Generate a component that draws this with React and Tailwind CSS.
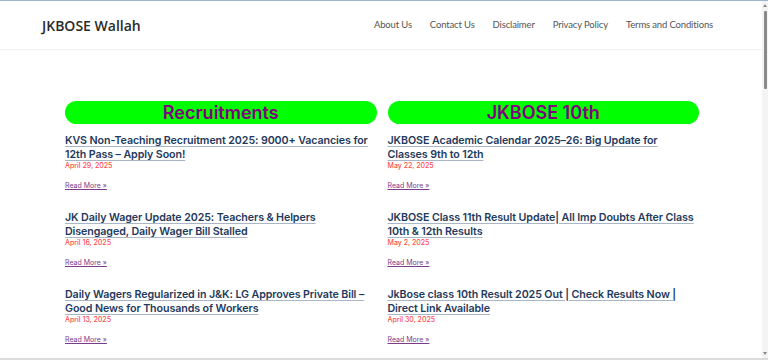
import React from "react";

const left = [
  { t: ["KVS Non-Teaching Recruitment 2025: 9000+ Vacancies for", "12th Pass – Apply Soon!"], d: "April 29, 2025" },
  { t: ["JK Daily Wager Update 2025: Teachers & Helpers", "Disengaged, Daily Wager Bill Stalled"], d: "April 16, 2025" },
  { t: ["Daily Wagers Regularized in J&K: LG Approves Private Bill –", "Good News for Thousands of Workers"], d: "April 13, 2025" },
];
const right = [
  { t: ["JKBOSE Academic Calendar 2025–26: Big Update for", "Classes 9th to 12th"], d: "May 22, 2025" },
  { t: ["JKBOSE Class 11th Result Update| All Imp Doubts After Class", "10th & 12th Results"], d: "May 2, 2025" },
  { t: ["JkBose class 10th Result 2025 Out | Check Results Now |", "Direct Link Available"], d: "April 30, 2025" },
];

function Column({ title, posts }) {
  return (
    <div className="flex flex-col">
      <div className="h-[23px] rounded-full bg-[#00ff00] flex items-center justify-center">
        <span className="text-[18px] font-semibold text-[#800080] leading-none" style={{ fontFamily: "Inter, sans-serif" }}>{title}</span>
      </div>
      <div className="flex flex-col pt-[10px]">
        {posts.map((p, i) => (
          <div key={i} className="flex flex-col h-[77px]">
            <a className="text-[10.7px] leading-[14px] font-semibold text-[#1f3a5c] underline decoration-[#a9b6c8] underline-offset-[2px] whitespace-nowrap tracking-[-0.1px]" style={{ fontFamily: "Inter, sans-serif" }}>
              {p.t[0]}<br />{p.t[1]}
            </a>
            <div className="text-[7px] leading-[8px] font-medium text-[#ff4d4d]" style={{ fontFamily: "Inter, sans-serif" }}>{p.d}</div>
            <a className="mt-[12px] text-[7px] leading-[8px] text-[#7a3b8a] underline" style={{ fontFamily: "Inter, sans-serif" }}>Read More »</a>
          </div>
        ))}
      </div>
    </div>
  );
}

export default function App() {
  return (
    <div className="w-[768px] h-[360px] overflow-hidden flex flex-col bg-white border-t border-[#9fb4d3]">
      <div className="flex flex-1 min-h-0">
        <div className="flex-1 flex flex-col min-h-0">
          <header className="shrink-0 h-[49px] flex items-center justify-between pl-[42px] pr-[49px] border-b border-[#f0f0f0]">
            <div className="text-[14px] font-semibold text-[#2a2a2a]" style={{ fontFamily: "'Open Sans', sans-serif" }}>JKBOSE Wallah</div>
            <nav className="flex gap-[18px] text-[9.5px] tracking-[-0.15px] text-[#555]" style={{ fontFamily: "Lato, sans-serif" }}>
              <span>About Us</span>
              <span>Contact Us</span>
              <span>Disclaimer</span>
              <span>Privacy Policy</span>
              <span>Terms and Conditions</span>
            </nav>
          </header>
          <main className="grid grid-cols-2 gap-[11px] pl-[65px] pr-[63px] pt-[51px]">
            <Column title="Recruitments" posts={left} />
            <Column title="JKBOSE 10th" posts={right} />
          </main>
        </div>
        <div className="w-[6px] bg-[#f4f4f4] flex flex-col items-center pt-[3px]">
          <div className="w-0 h-0 border-l-[2px] border-r-[2px] border-b-[3px] border-l-transparent border-r-transparent border-b-[#888]" />
          <div className="mt-[4px] w-[3px] h-[78px] bg-[#8a8a8a] rounded-[1px]" />
          <div className="flex-1" />
          <div className="mb-[3px] w-0 h-0 border-l-[2px] border-r-[2px] border-t-[3px] border-l-transparent border-r-transparent border-t-[#888]" />
        </div>
      </div>
      <div className="h-[2px] bg-[#dcdcdc]" />
    </div>
  );
}
